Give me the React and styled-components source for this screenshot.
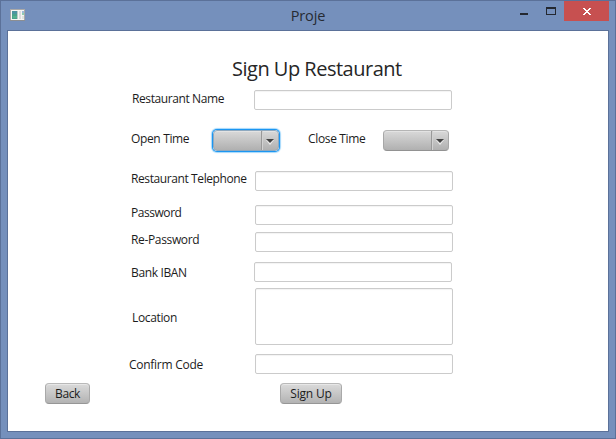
import React from "react";
import styled, { createGlobalStyle } from "styled-components";

const GlobalStyle = createGlobalStyle`
  * { box-sizing: border-box; }
  body { margin: 0; overflow: hidden; font-family: "Open Sans", "Noto Sans", sans-serif; }
`;

const Window = styled.div`
  width: 616px;
  height: 439px;
  display: flex;
  flex-direction: column;
  background: #7590bc;
  border: 1px solid #5b7199;
  padding: 0 6px 6px;
`;

const TitleBar = styled.header`
  height: 29px;
  flex: none;
  display: grid;
  grid-template-columns: 134px 1fr 134px;
`;

const AppIcon = styled.svg`
  margin: 8px 0 0 2px;
`;

const WindowTitle = styled.div`
  text-align: center;
  font-size: 14.5px;
  line-height: 29px;
  letter-spacing: -0.1px;
  color: #262b33;
`;

const Controls = styled.div`
  display: flex;
  justify-content: flex-end;
`;

const ControlButton = styled.button`
  border: 0;
  padding: 0;
  height: 20px;
  width: ${(p) => p.$width}px;
  background: ${(p) => (p.$close ? "#c75050" : "transparent")};
  display: flex;
`;

const Client = styled.main`
  flex: 1;
  background: #fff;
  border: 1px solid #5b7199;
  display: flex;
  flex-direction: column;
`;

const Heading = styled.h1`
  margin: 24px 0 0 224px;
  height: 28px;
  font-size: 20px;
  font-weight: 400;
  line-height: 28px;
  letter-spacing: -0.5px;
  color: #262626;
  white-space: nowrap;
`;

const Row = styled.div`
  display: flex;
  align-items: flex-start;
  flex: none;
  height: ${(p) => p.$height || 20}px;
  margin-top: ${(p) => p.$gap}px;
  padding-left: ${(p) => p.$indent}px;
`;

const Label = styled.label`
  flex: none;
  width: ${(p) => p.$width}px;
  margin-top: ${(p) => p.$drop || 0}px;
  font-size: 12px;
  line-height: 16px;
  letter-spacing: ${(p) => p.$spacing || -0.35}px;
  color: #1c1c1c;
  white-space: nowrap;
`;

const fieldStyle = `
  display: block;
  width: 198px;
  margin: 0;
  padding: 2px 5px;
  border: 1px solid #cbcbcb;
  border-radius: 2px;
  background: #fff;
  box-shadow: inset 0 1px 1px #f3f3f3;
  font: inherit;
  font-size: 12px;
  outline: none;
`;

const TextField = styled.input`
  ${fieldStyle}
  height: 20px;
`;

const TextArea = styled.textarea`
  ${fieldStyle}
  height: 57px;
  resize: none;
`;

const ComboBox = styled.button`
  flex: none;
  display: flex;
  justify-content: flex-end;
  width: 66px;
  height: 21px;
  padding: 0;
  border: 1px solid;
  border-color: ${(p) => (p.$focused ? "#8fa9bf" : "#b5b5b5 #a7a7a7 #929292")};
  border-radius: 4px;
  background: linear-gradient(#d9d9d9, #b0b0b0);
  box-shadow: inset 0 1px 0 #e3e3e3${(p) => (p.$focused ? ", 0 0 0 1px #1b96f2, 0 0 1px 2px #a4d8fb" : "")};
`;

const ComboArrow = styled.span`
  width: 17px;
  height: 100%;
  border-left: 1px solid #999;
  box-shadow: inset 1px 0 0 #d2d2d2;
  display: flex;
`;

const Button = styled.button`
  flex: none;
  width: ${(p) => p.$width}px;
  height: 21px;
  padding: 0;
  border: 1px solid;
  border-color: #b9b9b9 #a9a9a9 #969696;
  border-radius: 4px;
  background: linear-gradient(#dadada, #b3b3b3);
  box-shadow: inset 0 1px 0 #e7e7e7;
  font-family: inherit;
  font-size: 12px;
  line-height: 19px;
  letter-spacing: ${(p) => p.$spacing || 0}px;
  color: #1c1c1c;
`;

const Spacer = styled.span`
  flex: none;
  width: ${(p) => p.$width}px;
`;

function Combo({ focused }) {
  return (
    <ComboBox $focused={focused} type="button">
      <ComboArrow>
        <svg width="16" height="19" viewBox="0 0 16 19">
          <path d="M4 9h8l-4 5z" fill="#ededed" />
          <path d="M4 8h8l-4 4z" fill="#444" />
        </svg>
      </ComboArrow>
    </ComboBox>
  );
}

function FieldRow({ gap, indent, width, drop, spacing, label, type = "text" }) {
  return (
    <Row $gap={gap} $indent={indent}>
      <Label $width={width} $drop={drop} $spacing={spacing}>{label}</Label>
      <TextField type={type} aria-label={label} />
    </Row>
  );
}

export default function App() {
  return (
    <>
      <GlobalStyle />
      <Window>
        <TitleBar>
          <AppIcon width="17" height="14" viewBox="0 0 17 14" shapeRendering="crispEdges">
            <rect x="1" width="15" height="12" fill="#aaa9a8" />
            <rect x="1" y="11" width="15" height="1" fill="#8c8e92" />
            <rect x="2" y="1" width="13" height="10" fill="#f5f5f3" />
            <rect x="3" y="2" width="5" height="8" fill="#4b94a0" />
            <rect x="3" y="5" width="5" height="5" fill="#48a28c" />
            <rect x="4" y="7" width="4" height="2" fill="#54b18e" />
            <rect x="8" y="2" width="1" height="8" fill="#b9c9c6" />
            <rect x="10" y="2" width="2" height="8" fill="#dcdcdc" />
            <rect x="13" y="2" width="2" height="2" fill="#9bb9d8" />
            <rect x="13" y="4" width="2" height="2" fill="#8fceb0" />
            <rect x="13" y="7" width="2" height="3" fill="#dfe3df" />
          </AppIcon>
          <WindowTitle>Proje</WindowTitle>
          <Controls>
            <ControlButton $width={27} aria-label="Minimize">
              <svg width="27" height="20" shapeRendering="crispEdges">
                <rect x="10" y="12" width="8" height="2" fill="#242830" />
              </svg>
            </ControlButton>
            <ControlButton $width={27} aria-label="Maximize">
              <svg width="27" height="20" shapeRendering="crispEdges">
                <path d="M9 6h10v8H9zM10 8v5h8V8z" fillRule="evenodd" fill="#242830" />
              </svg>
            </ControlButton>
            <ControlButton $width={45} $close aria-label="Close">
              <svg width="45" height="20" shapeRendering="crispEdges">
                <path
                  d="M19 7h2v1h1v1h2v-1h1v-1h2v1h-1v1h-1v1h-1v1h1v1h1v1h1v1h-2v-1h-1v-1h-2v1h-1v1h-2v-1h1v-1h1v-1h1v-1h-1v-1h-1v-1h-1z"
                  fill="#fff"
                />
              </svg>
            </ControlButton>
          </Controls>
        </TitleBar>
        <Client>
          <Heading>Sign Up Restaurant</Heading>
          <FieldRow gap={7} indent={124} width={122} drop={1} spacing={-0.4} label="Restaurant Name" />
          <Row $gap={20} $indent={123} $height={21}>
            <Label $width={82} $drop={1}>Open Time</Label>
            <Combo focused />
            <Spacer $width={29} />
            <Label $width={75} $drop={1}>Close Time</Label>
            <Combo />
          </Row>
          <FieldRow gap={20} indent={123} width={124} spacing={-0.4} label="Restaurant Telephone" />
          <FieldRow gap={14} indent={123} width={124} spacing={-0.45} label="Password" type="password" />
          <FieldRow gap={7} indent={123} width={124} label="Re-Password" type="password" />
          <FieldRow gap={10} indent={123} width={123} drop={3} label="Bank IBAN" />
          <Row $gap={6} $indent={124} $height={57}>
            <Label $width={123} $drop={22}>Location</Label>
            <TextArea aria-label="Location" />
          </Row>
          <FieldRow gap={9} indent={121} width={126} drop={3} spacing={-0.27} label="Confirm Code" />
          <Row $gap={9} $indent={37} $height={21}>
            <Button $width={45} $spacing={-0.4}>Back</Button>
            <Spacer $width={190} />
            <Button $width={62} $spacing={-0.2}>Sign Up</Button>
          </Row>
        </Client>
      </Window>
    </>
  );
}
